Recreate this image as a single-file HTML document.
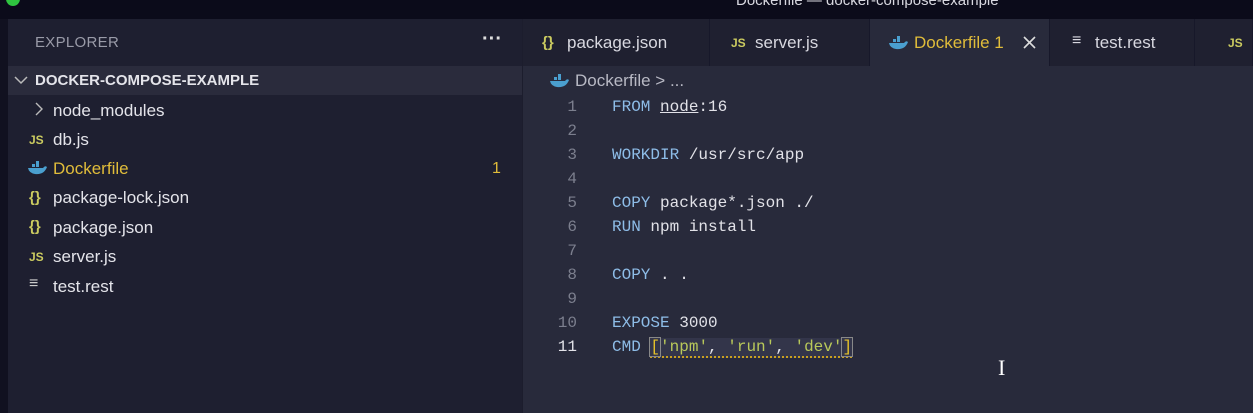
<!DOCTYPE html>
<html><head><style>
*{margin:0;padding:0;box-sizing:border-box}
body{width:1253px;height:413px;overflow:hidden;background:#1c1d2d;font-family:"Liberation Sans",sans-serif;position:relative}
.top{position:absolute;left:0;top:0;width:1253px;height:19px;background:#0b0b1a;color:#d8d8e0;font-size:15px;overflow:hidden}
.top .t{position:absolute;left:736px;top:-8px}
.dot{position:absolute;left:6px;top:-8px;width:14px;height:14px;border-radius:50%;background:#2fc540}
.lstrip{position:absolute;left:0;top:19px;width:8px;height:394px;background:#111120}
.side{position:absolute;left:8px;top:19px;width:514px;height:394px;background:#1e1f30}
.exp{position:absolute;left:35px;top:34px;color:#9a9ba8;font-size:15px;letter-spacing:.3px}
.dots{position:absolute;left:482px;top:28px;color:#ddd;font-size:20px;font-weight:bold;letter-spacing:0px}
.root{position:absolute;left:8px;top:66px;width:514px;height:29px;background:#2a2b3c;color:#e4e4ea;font-weight:bold;font-size:15px}
.root span{position:absolute;left:27px;top:6px}
.item{position:absolute;left:53px;color:#e4e4ea;font-size:17px}
.ic{position:absolute;left:29px;font-size:12px;font-weight:bold;color:#cbcb60}
.editor{position:absolute;left:523px;top:19px;width:730px;height:394px;background:#282a3b}
.tabs{position:absolute;left:523px;top:19px;width:730px;height:47px;background:#1e1f2f}
.tab{position:absolute;top:0;height:47px;background:#1f2030;border-right:1px solid #17182a;color:#d8d8e0;font-size:17px}
.tab span{position:absolute;top:14px}
.mono{font-family:"Liberation Mono",monospace;font-size:16px}
.ln{position:absolute;width:60px;text-align:right;left:517px;color:#7c7f8e}
.code{position:absolute;left:612px;color:#e2e2e8;white-space:pre}
.k{color:#8ebde8}.s{color:#b9c95a}
</style></head><body>
<div class="top"><div class="dot"></div><span class="t">Dockerfile — docker-compose-example</span></div>
<div class="lstrip"></div>
<div class="side"></div>
<div class="exp">EXPLORER</div>
<div class="dots">···</div>
<div class="root"><svg style="position:absolute;left:6px;top:9px" width="14" height="10"><path d="M1 2 L7 8 L13 2" stroke="#bbb" stroke-width="1.5" fill="none"/></svg><span>DOCKER-COMPOSE-EXAMPLE</span></div>
<svg style="position:absolute;left:35px;top:102px" width="8" height="14"><path d="M1 1 L7 7 L1 13" stroke="#bbb" stroke-width="1.4" fill="none"/></svg>
<div class="item" style="top:101px">node_modules</div>
<div class="ic" style="top:133px">JS</div><div class="item" style="top:130px">db.js</div>
<svg style="position:absolute;left:27px;top:161px" width="20" height="14"><path d="M1 7 H16 Q18 4 20 6 Q17 14 8 13 Q2 12 1 7Z" fill="#4a9fcf"/><rect x="5" y="3" width="3" height="3" fill="#4a9fcf"/><rect x="9" y="3" width="3" height="3" fill="#4a9fcf"/><rect x="9" y="0" width="3" height="3" fill="#4a9fcf"/></svg>
<div class="item" style="top:159px;color:#e0bc3a">Dockerfile</div><div style="position:absolute;left:492px;top:160px;color:#e0bc3a;font-size:16px">1</div>
<div class="ic" style="top:189px;font-weight:bold;font-size:15px">{}</div><div class="item" style="top:188px">package-lock.json</div>
<div class="ic" style="top:218px;font-weight:bold;font-size:15px">{}</div><div class="item" style="top:218px">package.json</div>
<div class="ic" style="top:250px">JS</div><div class="item" style="top:247px">server.js</div>
<div class="ic" style="top:275px;color:#ccc;font-weight:normal;font-size:16px">≡</div><div class="item" style="top:277px">test.rest</div>
<div class="editor"></div>
<div class="tabs">
<div class="tab" style="left:0;width:187px"><span style="left:19px;color:#cbcb60;font-size:15px;font-weight:bold;top:15px">{}</span><span style="left:44px">package.json</span></div>
<div class="tab" style="left:187px;width:160px"><span style="left:21px;color:#cbcb60;font-size:12px;font-weight:bold;top:17px">JS</span><span style="left:45px">server.js</span></div>
<div class="tab" style="left:347px;width:180px;background:#282a3b"><svg style="position:absolute;left:18px;top:17px" width="20" height="14"><path d="M1 7 H16 Q18 4 20 6 Q17 14 8 13 Q2 12 1 7Z" fill="#4a9fcf"/><rect x="5" y="3" width="3" height="3" fill="#4a9fcf"/><rect x="9" y="3" width="3" height="3" fill="#4a9fcf"/><rect x="9" y="0" width="3" height="3" fill="#4a9fcf"/></svg><span style="left:44px;color:#e0bc3a">Dockerfile 1</span><svg style="position:absolute;left:153px;top:17px" width="13" height="13"><path d="M1 1 L12 12 M12 1 L1 12" stroke="#ddd" stroke-width="1.6"/></svg></div>
<div class="tab" style="left:527px;width:145px"><span style="left:22px;font-size:16px;top:13px">≡</span><span style="left:45px">test.rest</span></div>
<div class="tab" style="left:672px;width:58px"><span style="left:33px;color:#cbcb60;font-size:12px;font-weight:bold;top:17px">JS</span></div>
</div>
<svg style="position:absolute;left:549px;top:74px" width="20" height="14"><path d="M1 7 H16 Q18 4 20 6 Q17 14 8 13 Q2 12 1 7Z" fill="#4a9fcf"/><rect x="5" y="3" width="3" height="3" fill="#4a9fcf"/><rect x="9" y="3" width="3" height="3" fill="#4a9fcf"/><rect x="9" y="0" width="3" height="3" fill="#4a9fcf"/></svg>
<div style="position:absolute;left:575px;top:71px;color:#b8b9c4;font-size:17px">Dockerfile &gt; ...</div>
<div class="mono">
<div class="ln" style="top:98px">1</div><div class="code" style="top:98px"><span class="k">FROM</span> <span style="text-decoration:underline">node</span>:16</div>
<div class="ln" style="top:122px">2</div>
<div class="ln" style="top:146px">3</div><div class="code" style="top:146px"><span class="k">WORKDIR</span> /usr/src/app</div>
<div class="ln" style="top:170px">4</div>
<div class="ln" style="top:194px">5</div><div class="code" style="top:194px"><span class="k">COPY</span> package*.json ./</div>
<div class="ln" style="top:218px">6</div><div class="code" style="top:218px"><span class="k">RUN</span> npm install</div>
<div class="ln" style="top:242px">7</div>
<div class="ln" style="top:266px">8</div><div class="code" style="top:266px"><span class="k">COPY</span> . .</div>
<div class="ln" style="top:290px">9</div>
<div class="ln" style="top:314px">10</div><div class="code" style="top:314px"><span class="k">EXPOSE</span> <span style="color:#e2e2e8">3000</span></div>
<div class="ln" style="top:338px;color:#e2e2e8">11</div><div class="code" style="top:338px"><span class="k">CMD</span> <span style="border-bottom:2px dotted #c9a020;background:#33354a"><span style="color:#e6c229;outline:1px solid #888">[</span><span class="s">'npm'</span>, <span class="s">'run'</span>, <span class="s">'dev'</span><span style="color:#e6c229;outline:1px solid #888">]</span></span></div>
</div>
<div style="position:absolute;left:998px;top:355px;color:#fff;font-size:22px;font-family:'Liberation Serif',serif">I</div>
</body></html>
